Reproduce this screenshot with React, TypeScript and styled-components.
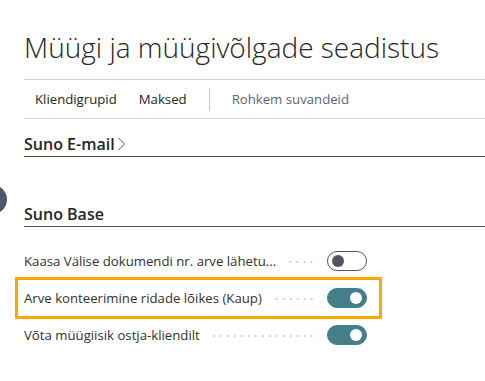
import React from 'react';
import styled, { createGlobalStyle, css } from 'styled-components';

const GlobalStyle = createGlobalStyle`
  html, body {
    margin: 0;
    padding: 0;
    background: #ffffff;
    font-family: "Open Sans", "Segoe UI", sans-serif;
    color: #323130;
  }
`;

const Page = styled.main`
  position: relative;
  width: 485px;
  height: 381px;
  overflow: hidden;
  padding-left: 24px;
  box-sizing: border-box;
`;

const Title = styled.h1`
  margin: 0;
  height: 80px;
  box-sizing: border-box;
  padding-top: 28px;
  font-size: 28px;
  font-weight: 300;
  line-height: 38px;
  color: #262626;
  border-bottom: 1px solid #d2d2d2;
  white-space: nowrap;
`;

const Toolbar = styled.nav`
  display: flex;
  align-items: center;
  height: 38px;
  padding-left: 11px;
  border-bottom: 1px solid #d2d2d2;
  font-size: 13.2px;
`;

const ToolItem = styled.span<{ $muted?: boolean }>`
  margin-right: 22px;
  color: ${(p) => (p.$muted ? '#5b6577' : '#252525')};
`;

const ToolDivider = styled.span`
  width: 1px;
  height: 23px;
  background: #c8c8c8;
  margin: 0 22px 0 0;
`;

const SectionHeader = styled.h2<{ $gap: number }>`
  display: flex;
  align-items: center;
  gap: 2px;
  margin: ${(p) => p.$gap}px 0 0 0;
  height: 22px;
  font-size: 16px;
  font-weight: 600;
  color: #252525;
  border-bottom: 1px solid #505050;
  padding-bottom: 1px;
  box-sizing: content-box;
`;

const Rows = styled.div`
  display: flex;
  flex-direction: column;
  gap: 13px;
  margin-top: 22px;
  width: 349px;
`;

const Row = styled.div<{ $highlighted?: boolean }>`
  display: flex;
  align-items: center;
  height: 24px;
  padding-right: 6px;
  ${(p) =>
    p.$highlighted &&
    css`
      outline: 3px solid #ffa800;
      outline-offset: 6px;
    `}
`;

const Label = styled.span`
  flex: 0 0 auto;
  font-size: 13.2px;
  color: #323130;
  white-space: nowrap;
`;

const Leader = styled.span`
  flex: 1 1 auto;
  height: 4px;
  margin: 2px 12px 0 10px;
  background-image: radial-gradient(circle, #c4c4c4 0.9px, transparent 1.2px);
  background-size: 7px 4px;
  background-position: right center;
`;

const Toggle = styled.span<{ $on: boolean }>`
  position: relative;
  flex: 0 0 auto;
  width: 40px;
  height: 20px;
  border-radius: 10px;
  box-sizing: border-box;
  border: 1px solid ${(p) => (p.$on ? '#447f89' : '#505463')};
  background: ${(p) => (p.$on ? '#447f89' : '#ffffff')};

  &::after {
    content: '';
    position: absolute;
    top: 3px;
    left: ${(p) => (p.$on ? '22px' : '4px')};
    width: 12px;
    height: 12px;
    border-radius: 50%;
    background: ${(p) => (p.$on ? '#ffffff' : '#505463')};
  }
`;

const EdgeDot = styled.span`
  position: absolute;
  left: -22px;
  top: 185px;
  width: 29px;
  height: 29px;
  border-radius: 50%;
  background: #50566a;
`;

const settings = [
  { label: 'Kaasa Välise dokumendi nr. arve lähetu...', on: false },
  { label: 'Arve konteerimine ridade lõikes (Kaup)', on: true, highlighted: true },
  { label: 'Võta müügiisik ostja-kliendilt', on: true },
];

export default function App() {
  return (
    <>
      <GlobalStyle />
      <Page>
        <EdgeDot />
        <Title>Müügi ja müügivõlgade seadistus</Title>
        <Toolbar>
          <ToolItem>Kliendigrupid</ToolItem>
          <ToolItem>Maksed</ToolItem>
          <ToolDivider />
          <ToolItem $muted>Rohkem suvandeid</ToolItem>
        </Toolbar>
        <SectionHeader $gap={14}>
          Suno E-mail
          <svg width="9" height="16" viewBox="0 0 9 16" fill="none">
            <path d="M1.5 2 L7.5 8 L1.5 14" stroke="#505050" strokeWidth="1" />
          </svg>
        </SectionHeader>
        <SectionHeader $gap={46}>Suno Base</SectionHeader>
        <Rows>
          {settings.map((s) => (
            <Row key={s.label} $highlighted={s.highlighted}>
              <Label>{s.label}</Label>
              <Leader />
              <Toggle $on={s.on} />
            </Row>
          ))}
        </Rows>
      </Page>
    </>
  );
}
